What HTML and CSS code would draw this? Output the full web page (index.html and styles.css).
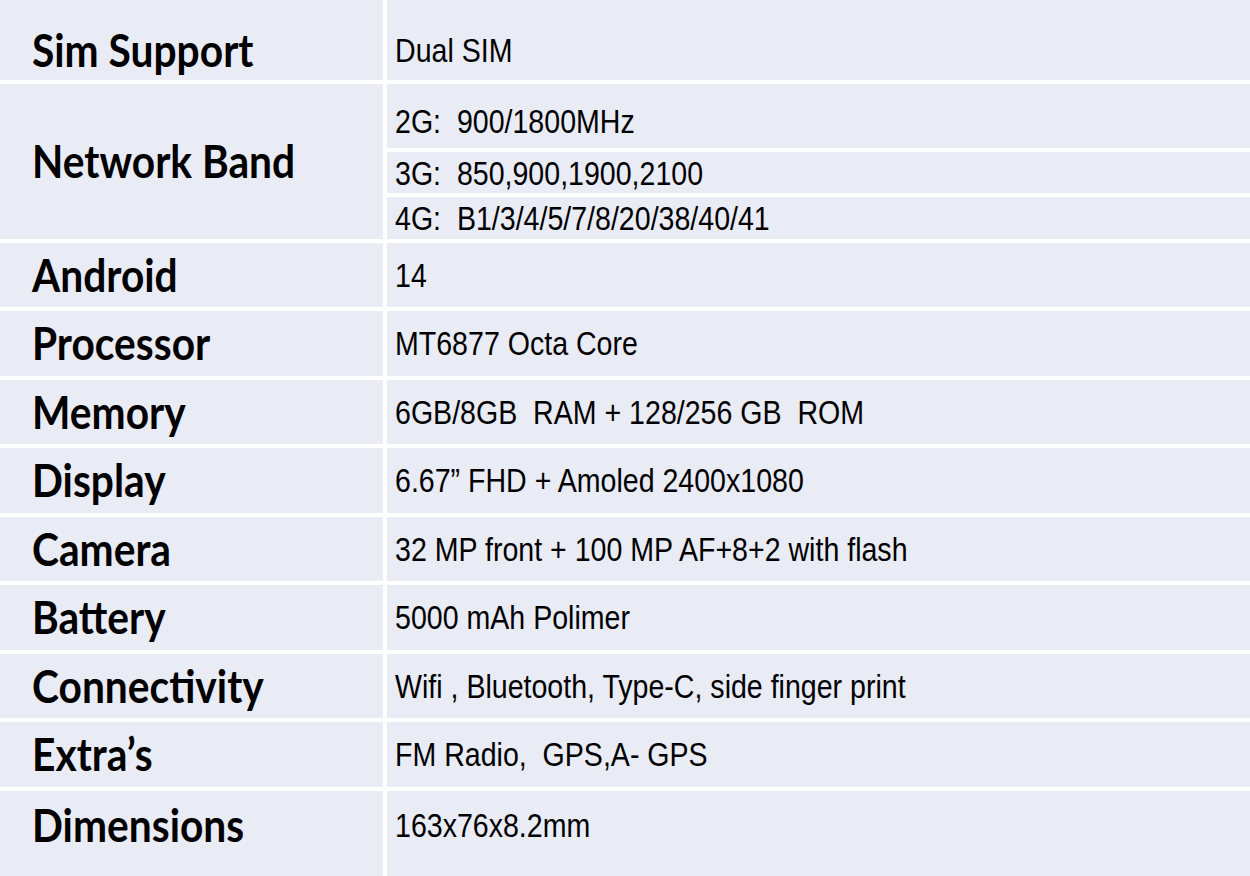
FILE: index.html
```html
<!DOCTYPE html>
<html lang="en">
<head>
<meta charset="utf-8">
<title>Specifications</title>
<link rel="stylesheet" href="styles.css">
</head>
<body>
<div class="specs">
  <div class="label first"><span>Sim Support</span></div>
  <div class="value first"><span>Dual SIM</span></div>

  <div class="label"><span>Network Band</span></div>
  <div class="bands">
    <div class="value band-2g"><span>2G:&nbsp; 900/1800MHz</span></div>
    <div class="value"><span>3G:&nbsp; 850,900,1900,2100</span></div>
    <div class="value"><span>4G:&nbsp; B1/3/4/5/7/8/20/38/40/41</span></div>
  </div>

  <div class="label"><span>Android</span></div>
  <div class="value"><span>14</span></div>

  <div class="label"><span>Processor</span></div>
  <div class="value"><span>MT6877 Octa Core</span></div>

  <div class="label"><span>Memory</span></div>
  <div class="value"><span>6GB/8GB&nbsp; RAM + 128/256 GB&nbsp; ROM</span></div>

  <div class="label"><span>Display</span></div>
  <div class="value"><span>6.67” FHD + Amoled 2400x1080</span></div>

  <div class="label"><span>Camera</span></div>
  <div class="value"><span>32 MP front + 100 MP AF+8+2 with flash</span></div>

  <div class="label"><span>Battery</span></div>
  <div class="value"><span>5000 mAh Polimer</span></div>

  <div class="label"><span>Connectivity</span></div>
  <div class="value"><span>Wifi , Bluetooth, Type-C, side finger print</span></div>

  <div class="label"><span>Extra’s</span></div>
  <div class="value"><span>FM Radio,&nbsp; GPS,A- GPS</span></div>

  <div class="label last"><span>Dimensions</span></div>
  <div class="value last"><span>163x76x8.2mm</span></div>
</div>
</body>
</html>
```
FILE: styles.css
```css
html, body {
  margin: 0;
  padding: 0;
  background: #ffffff;
  overflow: hidden;
}

.specs {
  width: 1250px;
  height: 876px;
  display: grid;
  grid-template-columns: 383px 1fr;
  grid-template-rows: 79.5px 155px repeat(8, 64.5px) 85.5px;
  gap: 4px;
  background: #ffffff;
  overflow: hidden;
}

.label,
.value {
  background: #e9ebf5;
  display: flex;
  align-items: center;
  color: #000000;
  white-space: nowrap;
  overflow: hidden;
}

.label {
  padding-left: 32px;
  font-family: Lato, "Open Sans", sans-serif;
  font-weight: 700;
  font-size: 46px;
  line-height: 1;
}

.label span {
  display: inline-block;
  transform: scaleX(0.885);
  transform-origin: left center;
}

.value {
  padding-left: 8px;
  font-family: "Liberation Sans", Arial, sans-serif;
  font-size: 34px;
  line-height: 1;
}

.value span {
  display: inline-block;
  transform: scaleX(0.84);
  transform-origin: left center;
}

.bands {
  display: grid;
  grid-template-rows: 64.5px 41px 41.5px;
  gap: 4px;
}

.band-2g {
  padding-top: 10px;
}

.first {
  padding-top: 20px;
}

.last {
  padding-bottom: 16px;
}
```
